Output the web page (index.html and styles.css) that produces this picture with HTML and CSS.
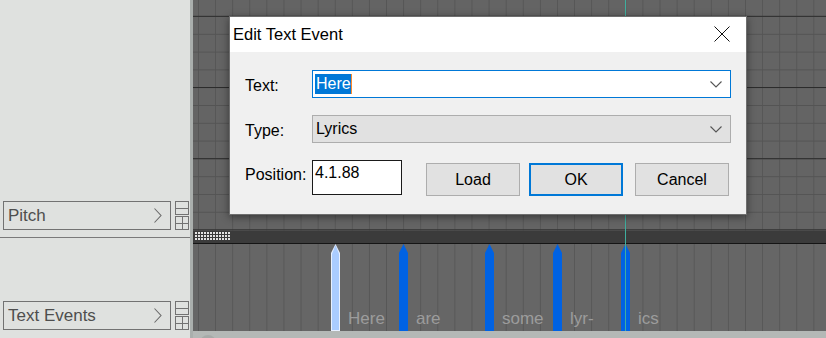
FILE: index.html
```html
<!DOCTYPE html>
<html lang="en">
<head>
    <meta charset="UTF-8">
    <meta name="viewport" content="width=device-width, initial-scale=1.0">
    <title>Edit Text Event</title>
    <link rel="stylesheet" href="styles.css">
</head>
<body>
    <div class="app">
        <div class="track-list">
            <div class="track track-pitch">
                <div class="track-header">
                    <div class="track-name">
                        <span>Pitch</span>
                        <svg class="chevron" width="8" height="15" viewBox="0 0 8 15"><path d="M0.5 0.5 L7 7.5 L0.5 14.5" fill="none" stroke="#6a6a6a" stroke-width="1.1"/></svg>
                    </div>
                    <div class="track-zoom">
                        <span class="zoom-btn minus"></span>
                        <span class="zoom-btn plus"></span>
                    </div>
                </div>
            </div>
            <div class="track track-text">
                <div class="track-header">
                    <div class="track-name">
                        <span>Text Events</span>
                        <svg class="chevron" width="8" height="15" viewBox="0 0 8 15"><path d="M0.5 0.5 L7 7.5 L0.5 14.5" fill="none" stroke="#6a6a6a" stroke-width="1.1"/></svg>
                    </div>
                    <div class="track-zoom">
                        <span class="zoom-btn minus"></span>
                        <span class="zoom-btn plus"></span>
                    </div>
                </div>
            </div>
        </div>

        <div class="splitter"></div>

        <div class="timeline">
            <div class="grid-pitch"></div>
            <div class="lane-bar"><div class="grip"></div></div>
            <div class="grid-events">
                <div class="event selected" style="left: 138px"><span class="pin"></span><span class="lyric">Here</span></div>
                <div class="event" style="left: 206px"><span class="pin"></span><span class="lyric">are</span></div>
                <div class="event" style="left: 292px"><span class="pin"></span><span class="lyric">some</span></div>
                <div class="event" style="left: 360px"><span class="pin"></span><span class="lyric">lyr-</span></div>
                <div class="event" style="left: 428px"><span class="pin"></span><span class="lyric">ics</span></div>
            </div>
            <div class="hscroll"><span class="scroll-knob"></span></div>
            <div class="cursor-line"></div>
        </div>
    </div>

    <div class="dialog">
        <div class="dialog-title">
            <span>Edit Text Event</span>
            <svg class="close" width="16" height="16" viewBox="0 0 16 16"><path d="M0.5 0.5 L15.5 15.5 M15.5 0.5 L0.5 15.5" stroke="#111" stroke-width="1"/></svg>
        </div>
        <div class="dialog-body">
            <label class="field-label">Text:</label>
            <div class="combo combo-edit">
                <span class="selection">Here</span>
                <svg class="drop" width="12" height="7" viewBox="0 0 12 7"><path d="M0.5 0.5 L6 6 L11.5 0.5" fill="none" stroke="#555" stroke-width="1.1"/></svg>
            </div>

            <label class="field-label">Type:</label>
            <div class="combo combo-list">
                <span>Lyrics</span>
                <svg class="drop" width="12" height="7" viewBox="0 0 12 7"><path d="M0.5 0.5 L6 6 L11.5 0.5" fill="none" stroke="#555" stroke-width="1.1"/></svg>
            </div>

            <label class="field-label label-position">Position:</label>
            <div class="position-row">
                <div class="position-input">4.1.88</div>
                <div class="buttons">
                    <button class="btn">Load</button>
                    <button class="btn btn-default">OK</button>
                    <button class="btn btn-cancel">Cancel</button>
                </div>
            </div>
        </div>
    </div>
</body>
</html>
```

FILE: styles.css
```css
body {
    margin: 0;
    padding: 0;
    width: 826px;
    height: 338px;
    overflow: hidden;
    font-family: "Liberation Sans", Arial, sans-serif;
    background-color: #dfe1df;
}
.app {
    display: flex;
    height: 338px;
}

/* track headers on the left */
.track-list {
    width: 190px;
    display: flex;
    flex-direction: column;
    background-color: #dfe1df;
}
.track {
    box-sizing: border-box;
    display: flex;
    flex-direction: column;
    justify-content: flex-end;
}
.track-pitch {
    height: 238px;
    padding-bottom: 7px;
    border-bottom: 1px solid #7a7a7a;
}
.track-text {
    flex: 1;
    padding-bottom: 8px;
}
.track-header {
    display: flex;
    height: 29px;
}
.track-name {
    box-sizing: border-box;
    margin-left: 3px;
    width: 168px;
    height: 29px;
    border: 1px solid #727272;
    display: flex;
    align-items: center;
    justify-content: space-between;
    padding: 0 8px 0 4px;
    font-size: 17px;
    color: #4e4e4e;
}
.chevron {
    display: block;
}
.track-zoom {
    margin-left: 4px;
    width: 14px;
    display: flex;
    flex-direction: column;
    gap: 1px;
}
.zoom-btn {
    position: relative;
    box-sizing: border-box;
    display: block;
    width: 14px;
    height: 14px;
    border: 1px solid #727272;
}
.zoom-btn::before {
    content: "";
    position: absolute;
    left: 0;
    right: 0;
    top: 6px;
    height: 1px;
    background-color: #727272;
}
.zoom-btn.plus::after {
    content: "";
    position: absolute;
    top: 0;
    bottom: 0;
    left: 6px;
    width: 1px;
    background-color: #727272;
}

.splitter {
    width: 3px;
    background-color: #aaafad;
}

/* piano roll area */
.timeline {
    flex: 1;
    position: relative;
    display: flex;
    flex-direction: column;
}
.grid-pitch {
    height: 231px;
    background:
        linear-gradient(to bottom, #2c2c2c 1px, transparent 1px) 0 87px / 100% 71.2px,
        linear-gradient(to bottom, #545454 1px, transparent 1px) 0 16px / 100% 17.8px,
        linear-gradient(to right, #565656 1px, transparent 1px) 5px 0 / 17.1px 100%,
        #646464;
}
.lane-bar {
    box-sizing: border-box;
    height: 13px;
    background-color: #3b3b3b;
    border-bottom: 1px solid #151515;
    padding: 1px 0 0 2px;
}
.grip {
    width: 36px;
    height: 9px;
    background:
        linear-gradient(to right, transparent 2px, #3b3b3b 2px) 0 0 / 3px 3px,
        linear-gradient(to bottom, transparent 2px, #3b3b3b 2px) 0 0 / 3px 3px,
        #e4e4e4;
}
.grid-events {
    position: relative;
    height: 87px;
    background:
        linear-gradient(to right, #575757 1px, transparent 1px) 5px 0 / 17.1px 100%,
        #666666;
}
.event {
    position: absolute;
    top: 0;
    bottom: 0;
    width: 9px;
}
.pin {
    position: absolute;
    inset: 0;
    background-color: #0062e3;
    clip-path: polygon(50% 0, 100% 9px, 100% 100%, 0 100%, 0 9px);
}
.event.selected .pin {
    background-color: #e8f0ff;
}
.event.selected .pin::after {
    content: "";
    position: absolute;
    inset: 1px;
    background-color: #aaccff;
    clip-path: polygon(50% 0, 100% 9px, 100% 100%, 0 100%, 0 9px);
}
.lyric {
    position: absolute;
    left: 17px;
    top: 66px;
    font-size: 17px;
    line-height: 17px;
    color: #9c9c9c;
    white-space: nowrap;
}
.hscroll {
    flex: 1;
    position: relative;
    background-color: #b4b8b6;
}
.scroll-knob {
    position: absolute;
    left: 7px;
    top: 4px;
    width: 16px;
    height: 16px;
    border-radius: 50%;
    background-color: #a6aaa8;
}
.cursor-line {
    position: absolute;
    left: 432px;
    top: 0;
    height: 331px;
    width: 1px;
    background-color: #3fae9e;
}

/* dialog */
.dialog {
    position: absolute;
    left: 229px;
    top: 16px;
    width: 518px;
    height: 199px;
    box-sizing: border-box;
    border: 1px solid #6e6e6e;
    background-color: #f0f0f0;
    box-shadow: 0px 2px 8px rgba(0, 0, 0, 0.45);
}
.dialog-title {
    height: 35px;
    background-color: #fff;
    display: flex;
    align-items: center;
    justify-content: space-between;
    padding: 0 16px 0 3px;
    font-size: 16.5px;
    color: #000;
}
.close {
    display: block;
    margin-top: -1px;
}
.dialog-body {
    display: grid;
    grid-template-columns: 67px 1fr;
    grid-template-rows: 28px 28px 35px;
    row-gap: 17px;
    align-items: center;
    padding: 18px 15px 0 15px;
    font-size: 16px;
    color: #000;
}
.field-label {
    padding-top: 3px;
}
.label-position {
    padding-top: 0;
    padding-bottom: 5px;
}
.combo {
    box-sizing: border-box;
    height: 28px;
    display: flex;
    align-items: center;
    justify-content: space-between;
    padding: 0 8px 0 3px;
}
.combo-edit {
    background-color: #fff;
    border: 1px solid #0078d7;
    padding-left: 2px;
}
.combo-list {
    background-color: #e1e1e1;
    border: 1px solid #adadad;
}
.selection {
    height: 20px;
    line-height: 20px;
    padding: 0 0 0 1px;
    background-color: #0078d7;
    color: #fff;
    border-right: 1px solid #ff8a2a;
}
.drop {
    display: block;
}
.position-row {
    display: flex;
    align-self: stretch;
}
.position-input {
    box-sizing: border-box;
    width: 90px;
    height: 35px;
    background-color: #fff;
    border: 1px solid #1a1a1a;
    padding: 3px 0 0 2px;
}
.buttons {
    display: flex;
    gap: 9px;
    margin-left: 24px;
    margin-top: 3px;
}
.btn {
    box-sizing: border-box;
    width: 94px;
    height: 33px;
    background-color: #e1e1e1;
    border: 1px solid #adadad;
    font-family: "Liberation Sans", Arial, sans-serif;
    font-size: 16px;
    color: #000;
    padding: 0;
}
.btn-default {
    border: 2px solid #0078d7;
}
.btn-cancel {
    margin-left: 3px;
}
```
